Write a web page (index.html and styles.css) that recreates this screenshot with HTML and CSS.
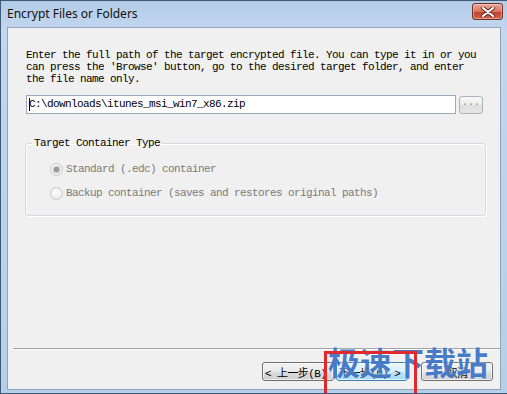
FILE: index.html
```html
<!DOCTYPE html>
<html lang="en">
<head>
    <meta charset="UTF-8">
    <title>Encrypt Files or Folders</title>
    <link rel="stylesheet" href="styles.css">
</head>
<body>
    <div class="window">
        <div class="titlebar">
            <span class="title">Encrypt Files or Folders</span>
            <button class="close" aria-label="Close">
                <svg width="14" height="10" viewBox="0 0 14 10">
                    <path d="M2 1 L12 9 M12 1 L2 9" stroke="#5a2a22" stroke-width="4" stroke-linecap="round"/>
                    <path d="M2 1 L12 9 M12 1 L2 9" stroke="#fff" stroke-width="2.2" stroke-linecap="round"/>
                </svg>
            </button>
        </div>

        <div class="client">
            <p class="intro">Enter the full path of the target encrypted file. You can type it in or you<br>can press the 'Browse' button, go to the desired target folder, and enter<br>the file name only.</p>

            <div class="path-row">
                <div class="path-input"><span class="caret"></span>C:\downloads\itunes_msi_win7_x86.zip</div>
                <button class="browse">...</button>
            </div>

            <fieldset class="group">
                <legend>Target Container Type</legend>
                <label class="radio"><span class="dot checked"></span>Standard (.edc) container</label>
                <label class="radio"><span class="dot"></span>Backup container (saves and restores original paths)</label>
            </fieldset>

            <div class="footer">
                <div class="separator"></div>
                <div class="buttons">
                    <button class="btn">&lt; 上一步(B)</button>
                    <button class="btn btn-hot">下一步(N) &gt;</button>
                    <button class="btn btn-cancel">取消</button>
                </div>
            </div>
        </div>

        <div class="watermark">极速下载站</div>
        <div class="highlight"></div>
    </div>
</body>
</html>
```

FILE: styles.css
```css
body {
    margin: 0;
    width: 507px;
    height: 394px;
    overflow: hidden;
    background: #a9c4e2;
}
.window {
    position: relative;
    box-sizing: border-box;
    width: 507px;
    height: 394px;
    border: 1px solid #3d5a78;
    border-right: none;
    padding: 0 6px 3px 6px;
    background: linear-gradient(#b4cce8, #c3d7ee 30px, #b6cfe9);
    display: flex;
    flex-direction: column;
    overflow: hidden;
}
.titlebar {
    height: 26px;
    display: flex;
    align-items: center;
    justify-content: space-between;
    flex-shrink: 0;
}
.title {
    font-family: "Noto Sans", sans-serif;
    font-size: 12px;
    color: #111;
    margin-top: -1px;
}
.close {
    width: 31px;
    height: 17px;
    margin-top: -5px;
    margin-right: -2px;
    padding: 0;
    border: 1px solid #6b2f2a;
    border-radius: 3px;
    background: linear-gradient(#e9a99a, #d7735f 50%, #c2422b 55%, #d2684e);
    box-shadow: inset 0 0 0 1px rgba(255,255,255,0.35);
    display: flex;
    align-items: center;
    justify-content: center;
}
.client {
    flex: 1;
    display: flex;
    flex-direction: column;
    background: #f0f0f0;
    border: 1px solid #8ea4bd;
    font-family: "Liberation Mono", "Noto Sans CJK SC", monospace;
    font-size: 11px;
    letter-spacing: -0.6px;
    color: #000;
}
.intro {
    margin: 21px 0 0 18px;
    line-height: 12px;
    white-space: nowrap;
}
.path-row {
    display: flex;
    align-items: center;
    gap: 3px;
    margin: 10px 0 0 18px;
}
.path-input {
    position: relative;
    box-sizing: border-box;
    width: 430px;
    height: 19px;
    line-height: 17px;
    padding-left: 2px;
    border: 1px solid #9aaabd;
    background: #fff;
    white-space: nowrap;
}
.caret {
    position: absolute;
    left: 2px;
    top: 2px;
    width: 1px;
    height: 13px;
    background: #000;
}
.browse {
    box-sizing: border-box;
    width: 24px;
    height: 18px;
    padding: 0 0 4px;
    border: 1px solid #aeb4ba;
    border-radius: 3px;
    background: linear-gradient(#f7f7f7, #ececec 50%, #dedede 50%, #e6e6e6);
    font-family: "Liberation Mono", monospace;
    font-size: 10px;
    letter-spacing: 0;
    color: #8a8a8a;
}
.group {
    box-sizing: border-box;
    width: 461px;
    margin: 23px 0 0 17px;
    padding: 8px 0 10px 0;
    border: 1px solid #d6dbe0;
    border-radius: 3px;
    box-shadow: inset 1px 1px 0 #fff, 1px 1px 0 #fff;
}
.group legend {
    margin-left: 6px;
    padding: 0 2px;
    line-height: 12px;
}
.radio {
    display: flex;
    align-items: center;
    height: 24px;
    margin-left: 24px;
    color: #7a7a7a;
    white-space: nowrap;
}
.dot {
    box-sizing: border-box;
    width: 13px;
    height: 13px;
    margin-right: 3px;
    border: 1px solid #c9c9c9;
    border-radius: 50%;
    background: radial-gradient(circle at 40% 35%, #fdfdfd, #e4e4e4);
    display: flex;
    align-items: center;
    justify-content: center;
}
.dot.checked::after {
    content: "";
    width: 5px;
    height: 5px;
    border-radius: 50%;
    background: #9a9a9a;
    box-shadow: 0 0 0 1px #bcbcbc;
}
.footer {
    margin-top: auto;
}
.separator {
    margin-left: 5px;
    height: 1px;
    background: #a0a0a0;
    border-bottom: 1px solid #fff;
}
.buttons {
    display: flex;
    justify-content: flex-end;
    gap: 2px;
    padding: 12px 7px 8px 0;
}
.btn {
    box-sizing: border-box;
    width: 72px;
    height: 19px;
    padding: 0 2px;
    border: 1px solid #707070;
    border-radius: 3px;
    background: linear-gradient(#f2f2f2, #ebebeb 50%, #dddddd 50%, #cfcfcf);
    box-shadow: inset 0 0 0 1px rgba(255,255,255,0.6);
    font-family: "Liberation Mono", "Noto Sans CJK SC", monospace;
    font-size: 11px;
    letter-spacing: -0.6px;
    text-align: left;
    white-space: nowrap;
    overflow: hidden;
}
.btn-hot {
    border-color: #3c7fb1;
    background: linear-gradient(#eaf6fd, #d9f0fc 50%, #bee6fd 50%, #a7d9f5);
}
.btn-cancel {
    margin-left: 11px;
    text-align: center;
}
.watermark {
    position: absolute;
    left: 327px;
    top: 344px;
    font-family: "Noto Sans CJK SC", sans-serif;
    font-weight: 700;
    font-size: 32px;
    line-height: 32px;
    letter-spacing: 0;
    color: rgba(40, 100, 190, 0.85);
    text-shadow: 0 0 2px rgba(255,255,255,0.9);
    white-space: nowrap;
}
.highlight {
    position: absolute;
    left: 323px;
    top: 350px;
    width: 87px;
    height: 50px;
    border: 3px solid #e0282d;
}
```
